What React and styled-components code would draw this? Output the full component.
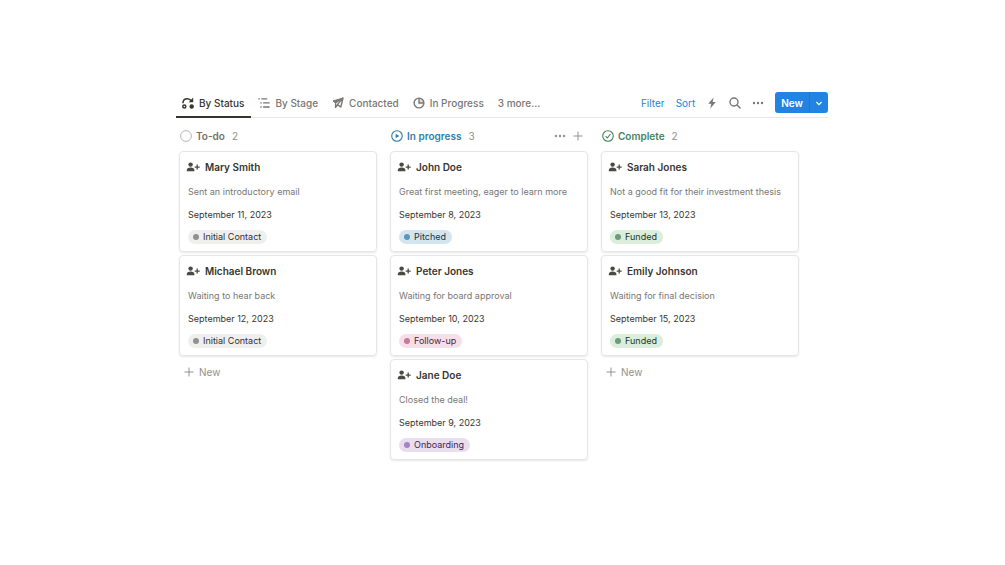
import React from 'react'
import styled, { createGlobalStyle } from 'styled-components'

const GlobalStyle = createGlobalStyle`
    * {
        box-sizing: border-box;
    }
    body {
        margin: 0;
        background: #fff;
        color: #37352f;
        font-family: Inter, "Liberation Sans", sans-serif;
        font-size: 10px;
        line-height: 16px;
    }
    button {
        border: 0;
        padding: 0;
        background: none;
        color: inherit;
        font: inherit;
        cursor: pointer;
    }
    h2, h3, p, ul {
        margin: 0;
        padding: 0;
        font: inherit;
        list-style: none;
    }
    svg {
        display: block;
        flex: none;
    }
`

const tabs = [
    { label: "By Status", icon: "status", active: true },
    { label: "By Stage", icon: "stage" },
    { label: "Contacted", icon: "plane" },
    { label: "In Progress", icon: "pie" },
    { label: "3 more..." },
]

const tagColors = {
    "Initial Contact": { background: "#efefee", dot: "#91918e", color: "#32302c" },
    "Pitched": { background: "#d3e5ef", dot: "#5b97bd", color: "#183347" },
    "Follow-up": { background: "#f5e0e9", dot: "#cd749f", color: "#4c2337" },
    "Funded": { background: "#dbeddb", dot: "#6c9b7d", color: "#1c3829" },
    "Onboarding": { background: "#e8deee", dot: "#a782c3", color: "#412454" },
}

const columns = [
    {
        title: "To-do",
        icon: "todo",
        color: "#73726e",
        canAdd: true,
        cards: [
            { name: "Mary Smith", note: "Sent an introductory email", date: "September 11, 2023", tag: "Initial Contact" },
            { name: "Michael Brown", note: "Waiting to hear back", date: "September 12, 2023", tag: "Initial Contact" },
        ],
    },
    {
        title: "In progress",
        icon: "play",
        color: "#337ea9",
        hovered: true,
        cards: [
            { name: "John Doe", note: "Great first meeting, eager to learn more", date: "September 8, 2023", tag: "Pitched" },
            { name: "Peter Jones", note: "Waiting for board approval", date: "September 10, 2023", tag: "Follow-up" },
            { name: "Jane Doe", note: "Closed the deal!", date: "September 9, 2023", tag: "Onboarding" },
        ],
    },
    {
        title: "Complete",
        icon: "check",
        color: "#448361",
        canAdd: true,
        cards: [
            { name: "Sarah Jones", note: "Not a good fit for their investment thesis", date: "September 13, 2023", tag: "Funded" },
            { name: "Emily Johnson", note: "Waiting for final decision", date: "September 15, 2023", tag: "Funded" },
        ],
    },
]

const icons = {
    status: <g fill="none" stroke="currentColor" strokeWidth="1.5">
        <path d="M.9 6.2C1 3.4 2.9 1.7 5.2 1.7c1.9 0 3.3.9 4.4 2.3" />
        <path d="M11.2.6v4.6H6.7z" fill="currentColor" stroke="none" />
        <circle cx="2.3" cy="9.5" r="1.5" />
        <circle cx="9.7" cy="9.5" r="2.2" fill="currentColor" stroke="none" />
    </g>,
    stage: <g stroke="currentColor" strokeWidth="1.3" strokeLinecap="round">
        <path d="M.8 1.8h.6M3.8 1.8h5M2.8 5.9h.4M5.6 5.9h5.6M2.8 10h.4M5.6 10h5.6" />
    </g>,
    plane: <g fill="none" stroke="currentColor" strokeLinejoin="round">
        <path d="M11 1 1 4l2.6 2.2L11 1z" fill="currentColor" strokeWidth="1" />
        <path d="M11 1 8.8 10 5.4 7.6 11 1zM3.6 6.2v4.2l2-2.6" strokeWidth="1.4" />
    </g>,
    pie: <g stroke="currentColor" strokeWidth="1.4">
        <circle cx="6" cy="6" r="4.9" fill="none" />
        <path d="M6 1.1V6h4.9" fill="none" />
        <path d="M6 1.1V6h4.9A4.9 4.9 0 0 0 6 1.1z" fill="currentColor" fillOpacity=".25" stroke="none" />
    </g>,
    bolt: <path d="M7.6.6 2.2 6.7h3.1L4.2 11.4l5.6-6.3H6.6z" fill="currentColor" />,
    search: <g fill="none" stroke="currentColor" strokeWidth="1.4" strokeLinecap="round">
        <circle cx="5" cy="5" r="4" />
        <path d="m8.1 8.1 3 3" />
    </g>,
    dots: <g fill="currentColor">
        <circle cx="2" cy="6" r="1.2" />
        <circle cx="6" cy="6" r="1.2" />
        <circle cx="10" cy="6" r="1.2" />
    </g>,
    plus: <path d="M6 1.5v9M1.5 6h9" stroke="currentColor" />,
    chevron: <path d="m3.4 5 2.6 2.6L8.6 5" fill="none" stroke="currentColor" strokeWidth="1.2" />,
    todo: <circle cx="6" cy="6" r="5.4" fill="none" stroke="#b6b5b2" />,
    play: <g>
        <circle cx="6" cy="6" r="5.3" fill="none" stroke="currentColor" strokeWidth="1.1" />
        <path d="M4.6 3.8v4.4L8.4 6z" fill="currentColor" />
    </g>,
    check: <g fill="none" stroke="currentColor" strokeWidth="1.1">
        <circle cx="6" cy="6" r="5.3" />
        <path d="m3.6 6.2 1.7 1.8 3.2-4" />
    </g>,
}

function Icon({ name }) {
    return <svg width="12" height="12" viewBox="0 0 12 12" aria-hidden="true">{icons[name]}</svg>
}

function PersonIcon() {
    return (
        <svg width="14" height="12" viewBox="0 0 14 12" aria-hidden="true">
            <circle cx="4.6" cy="3.6" r="2.2" fill="#4b4944" />
            <path d="M.8 10.2V9c0-1.700 1.400-2.600 3.800-2.600S8.400 7.300 8.400 9v1.200z" fill="#4b4944" />
            <path d="M11.200 3.600v5M8.700 6.100h5" stroke="#4b4944" strokeWidth="1.300" />
        </svg>
    )
}

function Card({ item }) {
    return (
        <CardBox>
            <CardTitle><PersonIcon />{item.name}</CardTitle>
            <CardBody>
                <Note>{item.note}</Note>
                <p>{item.date}</p>
                <Tag $colors={tagColors[item.tag]}>{item.tag}</Tag>
            </CardBody>
        </CardBox>
    )
}

function Column({ column }) {
    return (
        <section>
            <ColumnHeader>
                <ColumnTitle $color={column.color}><Icon name={column.icon} />{column.title}</ColumnTitle>
                <Count>{column.cards.length}</Count>
                {column.hovered && <ColumnActions>
                    <button aria-label="Column options"><Icon name="dots" /></button>
                    <button aria-label="Add card"><Icon name="plus" /></button>
                </ColumnActions>}
            </ColumnHeader>
            <CardList>
                {column.cards.map(item => <Card key={item.name} item={item} />)}
            </CardList>
            {column.canAdd && <AddButton><Icon name="plus" />New</AddButton>}
        </section>
    )
}

function App() {
    return (
        <Page>
            <GlobalStyle />
            <Toolbar>
                <Tabs>
                    {tabs.map(tab => <Tab key={tab.label} $active={tab.active}>
                        {tab.icon && <Icon name={tab.icon} />}
                        {tab.label}
                    </Tab>)}
                </Tabs>
                <Actions>
                    <LinkButton>Filter</LinkButton>
                    <LinkButton>Sort</LinkButton>
                    <button aria-label="Automations"><Icon name="bolt" /></button>
                    <button aria-label="Search"><Icon name="search" /></button>
                    <button aria-label="View options"><Icon name="dots" /></button>
                    <NewGroup>
                        <NewButton>New</NewButton>
                        <NewMenuButton aria-label="New from template"><Icon name="chevron" /></NewMenuButton>
                    </NewGroup>
                </Actions>
            </Toolbar>
            <Board>
                {columns.map(column => <Column key={column.title} column={column} />)}
            </Board>
        </Page>
    )
}

const Page = styled.main`
    padding: 92px 177px 92px 176px;
`

const Toolbar = styled.header`
    display: flex;
    justify-content: space-between;
    height: 26px;
    border-bottom: 1px solid #e9e9e7;
`

const Tabs = styled.nav`
    display: flex;
`

const Tab = styled.button`
    display: flex;
    align-items: center;
    gap: 5px;
    height: 26px;
    padding: 0 7px 2px 6px;
    border-bottom: 2px solid ${props => props.$active ? "#37352f" : "transparent"};
    color: ${props => props.$active ? "#37352f" : "#787774"};
    font-weight: 500;
    white-space: nowrap;

    & + & {
        margin-left: 1px;
    }
`

const Actions = styled.div`
    display: flex;
    align-items: center;
    gap: 11px;
    height: 21px;
    color: #787774;
`

const LinkButton = styled.button`
    color: #2383e2;
`

const NewGroup = styled.div`
    display: flex;
    height: 21px;
    border-radius: 3px;
    overflow: hidden;
    background: #2383e2;
    color: #fff;
`

const NewButton = styled.button`
    padding: 0 6px;
    font-weight: 600;
`

const NewMenuButton = styled.button`
    padding: 0 3px;
    border-left: 1px solid #1f76cb;
`

const Board = styled.div`
    display: grid;
    grid-template-columns: repeat(3, minmax(0, 198px));
    gap: 13px;
    padding-left: 3px;
`

const ColumnHeader = styled.div`
    display: flex;
    align-items: center;
    gap: 7px;
    height: 33px;
    padding: 3px 4px 0 1px;
`

const ColumnTitle = styled.h2`
    display: flex;
    align-items: center;
    gap: 4px;
    color: ${props => props.$color};
    font-weight: 600;
`

const Count = styled.span`
    color: #91918e;
`

const ColumnActions = styled.div`
    display: flex;
    gap: 6px;
    margin-left: auto;
    color: #91918e;
`

const CardList = styled.ul`
    display: grid;
    gap: 3px;
`

const CardBox = styled.li`
    padding: 7px 6px;
    border: 1px solid #e6e6e5;
    border-radius: 4px;
    box-shadow: 0 1px 2px rgba(15, 15, 15, 0.1);
`

const CardTitle = styled.h3`
    display: flex;
    align-items: center;
    gap: 5px;
    font-weight: 600;
`

const CardBody = styled.div`
    display: flex;
    flex-direction: column;
    align-items: flex-start;
    gap: 9px;
    margin-top: 10px;
    padding-left: 2px;
    font-size: 9px;
    line-height: 13px;
`

const Note = styled.p`
    color: #787774;
    line-height: 14px;
`

const Tag = styled.span`
    display: flex;
    align-items: center;
    gap: 4px;
    padding: 0 6px 0 5px;
    border-radius: 7px;
    background: ${props => props.$colors.background};
    color: ${props => props.$colors.color};
    line-height: 14px;

    &::before {
        content: "";
        width: 6px;
        height: 6px;
        border-radius: 50%;
        background: ${props => props.$colors.dot};
    }
`

const AddButton = styled.button`
    display: flex;
    align-items: center;
    gap: 4px;
    margin-top: 8px;
    padding-left: 4px;
    color: #91918e;
`

export default App
